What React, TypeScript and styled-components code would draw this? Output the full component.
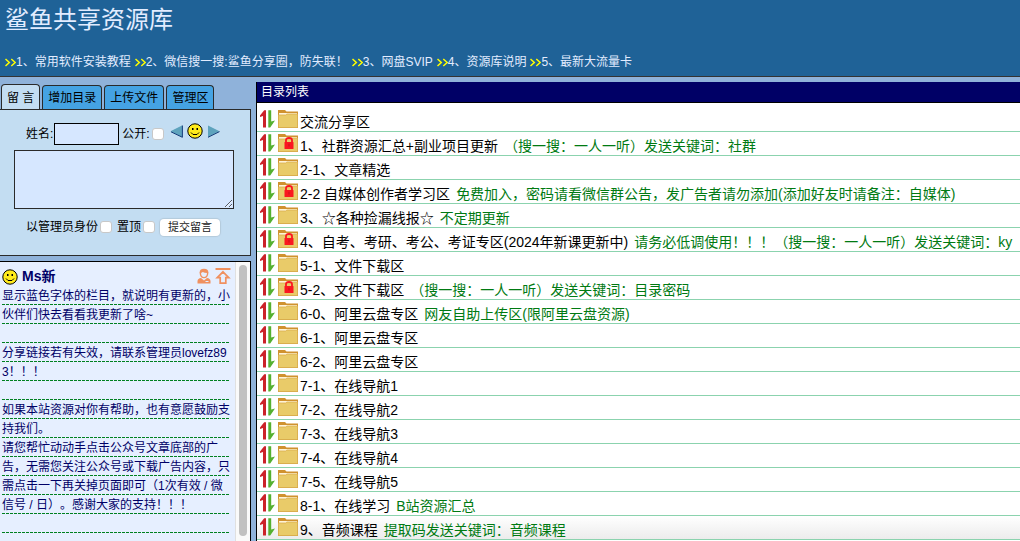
import React from "react";
import styled, { createGlobalStyle } from "styled-components";

const Global = createGlobalStyle`
  * { box-sizing: border-box; }
  html, body, #root { height: 100%; }
  body {
    margin: 0;
    overflow: hidden;
    background: #8fb2da;
    color: #000;
    font: 12px/18px "Liberation Sans", Arial, "Noto Sans CJK SC", sans-serif;
    text-spacing-trim: space-all;
  }
  a { color: inherit; text-decoration: none; }
`;

const Page = styled.div`
  display: flex;
  flex-direction: column;
  height: 100vh;
`;

const Header = styled.header`
  display: flex;
  flex-direction: column;
  gap: 13px;
  padding: 0 5px 4px;
  background: #1f6297;
  color: #e2ecff;
  border-bottom: 1px solid #333;
`;

const Title = styled.h1`
  margin: 0;
  font-size: 24px;
  font-weight: 400;
  line-height: 40px;
`;

const Nav = styled.nav`
  display: flex;
  gap: 4px;
  line-height: 19px;
`;

const NavLink = styled.a`
  display: flex;
  align-items: center;
  white-space: nowrap;
`;

const Main = styled.main`
  display: flex;
  flex: 1;
  gap: 5px;
  min-height: 0;
  padding-top: 5px;
`;

const Side = styled.aside`
  display: flex;
  flex-direction: column;
  flex: none;
  width: 251px;
  padding-top: 2px;
`;

const Tabs = styled.div`
  display: flex;
  align-items: flex-end;
  gap: 2px;
  padding-left: 1px;
`;

const Tab = styled.button<{ $active?: boolean }>`
  height: ${(p) => (p.$active ? 26 : 24)}px;
  margin-bottom: ${(p) => (p.$active ? -1 : 0)}px;
  padding: 0 5px;
  border: 1px solid #2a2a2a;
  border-bottom: 0;
  border-radius: 4px 4px 0 0;
  background: ${(p) => (p.$active ? "#c3ddf2" : "#45a3e3")};
  color: #000;
  font: inherit;
  white-space: nowrap;
`;

const Form = styled.form`
  display: flex;
  flex-direction: column;
  gap: 5px;
  height: 147px;
  padding: 13px 16px 0 14px;
  background: #c3ddf2;
  border: 1px solid #2a2a2a;
  border-left: 0;
`;

const FormRow = styled.div`
  display: flex;
  align-items: center;
  height: 22px;
  padding-left: 12px;
`;

const NameInput = styled.input`
  width: 65px;
  height: 22px;
  margin-left: 1px;
  border: 1px solid #000;
  border-radius: 0;
  background: #d6e7ff;
`;

const Check = styled.input`
  appearance: none;
  width: 12px;
  height: 12px;
  margin: 0;
  border: 1px solid #c8c8c8;
  border-radius: 3px;
  background: #fff;
`;

const CheckLabel = styled.label`
  display: flex;
  align-items: center;
  gap: 2px;
  margin-left: 3px;
`;

const Faces = styled.div`
  display: flex;
  align-items: center;
  gap: 4px;
  height: 28px;
  margin-left: 6px;
  padding-bottom: 6px;
`;

const IconButton = styled.button`
  display: flex;
  padding: 0;
  border: 0;
  background: none;
`;

const Message = styled.textarea`
  display: block;
  width: 100%;
  height: 59px;
  border: 1px solid #2a2a2a;
  border-radius: 0;
  background: #d6e7ff;
`;

const SubmitRow = styled(FormRow)`
  gap: 2px;
  margin-top: 2px;
  padding-left: 9px;
`;

const Submit = styled.button`
  height: 17px;
  margin-left: 3px;
  padding: 0 8px;
  border: 0;
  border-radius: 4px;
  background: #fff;
  box-shadow: 0 0 1px 1px #b4cadb;
  color: #222;
  font: inherit;
  font-size: 11px;
  line-height: 17px;
`;

const Board = styled.section`
  display: flex;
  flex: 1;
  min-height: 0;
  margin-top: 5px;
  border: solid #000;
  border-width: 1px 1px 0 0;
  background: #e6efff;
  color: #000066;
`;

const Post = styled.article`
  flex: 1;
  min-width: 0;
  padding: 5px 6px 0 2px;
`;

const PostHead = styled.div`
  display: flex;
  align-items: center;
  gap: 4px;
  height: 19px;
`;

const Author = styled.h2`
  flex: 1;
  margin: 0;
  font-size: 14px;
  line-height: 19px;
`;

const PostTools = styled.div`
  display: flex;
  gap: 4px;
  margin-right: -2px;
  padding-bottom: 2px;
`;

/* Every text line sits on a dashed green rule, repeated at the line height. */
const PostBody = styled.div`
  padding-top: 1px;
  line-height: 19px;
  word-break: break-all;
  background-image: linear-gradient(90deg, transparent 3px, #e6efff 3px),
    linear-gradient(transparent 18px, #008020 18px);
  background-size: 4px 19px, 100% 19px;

  p {
    margin: 0 -2px 0 0;
    min-height: 19px;
  }
`;

const ScrollTrack = styled.div`
  width: 15px;
  padding: 3px 3px 4px;
  border-left: 1px solid #e0e0e0;
  background: #fafafa;
`;

const ScrollThumb = styled.div`
  height: calc(100% - 1px);
  border-radius: 4px;
  background: #c1c1c1;
`;

const Directory = styled.section`
  display: flex;
  flex-direction: column;
  flex: 1;
  min-width: 0;
  overflow: hidden;
  border-left: 1px solid #000;
  background: #fff;
`;

const DirectoryTitle = styled.h2`
  flex: none;
  margin: 0 0 5px;
  padding: 1px 0 0 4px;
  border-bottom: 1px solid #000;
  background: #000066;
  color: #fff;
  font-size: 12px;
  font-weight: 400;
  line-height: 19px;
`;

const List = styled.ul`
  margin: 0;
  padding: 0;
  list-style: none;
  font-size: 14px;
`;

const Item = styled.li`
  display: flex;
  height: 24px;
  padding: 1px 0 0 3px;
  border-bottom: 1px solid #8bd3ae;
  white-space: nowrap;

  &:last-child {
    background: linear-gradient(#fff, #ececec);
  }
`;

const ItemLink = styled.a`
  padding: 4px 0 0 2px;
`;

const Note = styled.span`
  padding: 4px 0 0 6px;
  color: #007a12;
`;

const Chevrons = () => (
  <svg width="11" height="9" viewBox="0 0 11 9" fill="none" stroke="#ffff00" strokeWidth="1.5" aria-hidden="true">
    <path d="M0.5 1 L4.3 4.5 L0.5 8 M6.3 1 L10.2 4.5 L6.3 8" />
  </svg>
);

const Smile = () => (
  <svg width="16" height="16" viewBox="0 0 16 16" aria-hidden="true">
    <circle cx="8" cy="8" r="7.2" fill="#ffeb1c" stroke="#000" />
    <path d="M5 5h1.5v2H5zM9.5 5H11v2H9.5z" fill="#000" />
    <path d="M4 9.5L6 11.5H10L12 9.5" fill="none" stroke="#000" />
  </svg>
);

const Triangle = ({ left }: { left?: boolean }) => (
  <svg width="13" height="13" viewBox="0 0 13 13" aria-hidden="true">
    {left ? (
      <>
        <path d="M12 0.5V12L0.5 6.2Z" fill="#5ea3bd" />
        <path d="M12.4 0.5V12.3L1 6.8" fill="none" stroke="#123a78" />
      </>
    ) : (
      <>
        <path d="M1 0.5V12L12.5 6.2Z" fill="#5ea3bd" />
        <path d="M1 12.3L12.5 6.6" fill="none" stroke="#123a78" />
      </>
    )}
  </svg>
);

const UserIcon = () => (
  <svg width="14" height="16" viewBox="0 0 14 16" fill="none" stroke="#f0905f" aria-hidden="true">
    <path d="M3.4 4.2V6Q4 9.6 7 9.6Q10 9.6 10.6 6V4.2" strokeWidth="1.4" />
    <path d="M2.7 5Q2.4 0.8 7 0.8Q11.6 0.8 11.3 5Q7.5 5.2 5.8 3.9Q4.8 5 2.7 5Z" fill="#f0905f" stroke="none" />
    <path d="M0.5 15.5V13Q0.8 10.6 4 10.1L7 12.6L10 10.1Q13.2 10.6 13.5 13V15.5Z" fill="#f0905f" stroke="none" />
    <path d="M8.5 13.5H11.5" stroke="#e6efff" />
  </svg>
);

const TopIcon = () => (
  <svg width="16" height="16" viewBox="0 0 16 16" fill="none" stroke="#f0905f" aria-hidden="true">
    <path d="M0.5 1H15.5" strokeWidth="2" />
    <path d="M8 3.8L13.8 9.7H10.8V15.2H5.2V9.7H2.2Z" strokeWidth="1.7" />
  </svg>
);

const Arrows = () => (
  <svg width="15" height="19" viewBox="0 0 15 19" aria-hidden="true">
    <path d="M0 6.5L4.2 1.2H6V18.4H3V7L0 8Z" fill="#cb2229" />
    <path d="M8.3 1.2H11.2V12.4L15 11.6L10.2 18.4H8.3Z" fill="#55b030" />
  </svg>
);

const FolderSvg = styled.svg`
  margin-left: 3px;
`;

const Folder = ({ locked }: { locked?: boolean }) => (
  <FolderSvg width="20" height="20" viewBox="0 0 20 20" aria-hidden="true">
    <path d="M0 1H7L8.5 2.5H20V19H0Z" fill="#d0922f" />
    <path d="M1 4H19V7H1Z" fill="#fff4d8" />
    <path d="M0.4 6H7.5L9 5H19.6V18.5H0.4Z" fill="#e9cb69" stroke="#d9ad4e" strokeWidth="0.8" />
    {locked && (
      <>
        <path d="M8 9V7Q8 5 11 5Q14 5 14 7V9" fill="none" stroke="#fa1720" strokeWidth="1.8" />
        <rect x="6.5" y="9" width="9" height="7" rx="0.6" fill="#fa1720" />
        <path d="M11 10.8V13.5" stroke="#c3141a" />
      </>
    )}
  </FolderSvg>
);

const links = [
  "1、常用软件安装教程",
  "2、微信搜一搜:鲨鱼分享圈，防失联！",
  "3、网盘SVIP",
  "4、资源库说明",
  "5、最新大流量卡",
];

const items: { name: string; note?: string; locked?: boolean }[] = [
  { name: "交流分享区" },
  { name: "1、社群资源汇总+副业项目更新", note: "（搜一搜：一人一听）发送关键词：社群", locked: true },
  { name: "2-1、文章精选" },
  { name: "2-2 自媒体创作者学习区", note: "免费加入，密码请看微信群公告，发广告者请勿添加(添加好友时请备注：自媒体)", locked: true },
  { name: "3、☆各种捡漏线报☆", note: "不定期更新" },
  { name: "4、自考、考研、考公、考证专区(2024年新课更新中)", note: "请务必低调使用！！！（搜一搜：一人一听）发送关键词：ky", locked: true },
  { name: "5-1、文件下载区" },
  { name: "5-2、文件下载区", note: "（搜一搜：一人一听）发送关键词：目录密码", locked: true },
  { name: "6-0、阿里云盘专区", note: "网友自助上传区(限阿里云盘资源)" },
  { name: "6-1、阿里云盘专区" },
  { name: "6-2、阿里云盘专区" },
  { name: "7-1、在线导航1" },
  { name: "7-2、在线导航2" },
  { name: "7-3、在线导航3" },
  { name: "7-4、在线导航4" },
  { name: "7-5、在线导航5" },
  { name: "8-1、在线学习", note: "B站资源汇总" },
  { name: "9、音频课程", note: "提取码发送关键词：音频课程" },
];

const paragraphs = [
  "显示蓝色字体的栏目，就说明有更新的，小伙伴们快去看看我更新了啥~",
  "",
  "分享链接若有失效，请联系管理员lovefz893！！！",
  "",
  "如果本站资源对你有帮助，也有意愿鼓励支持我们。",
  "请您帮忙动动手点击公众号文章底部的广告，无需您关注公众号或下载广告内容，只需点击一下再关掉页面即可（1次有效 / 微信号 / 日）。感谢大家的支持！！！",
  "",
];

export default function App() {
  return (
    <Page>
      <Global />
      <Header>
        <Title>鲨鱼共享资源库</Title>
        <Nav>
          {links.map((text) => (
            <NavLink href="#" key={text}>
              <Chevrons />
              {text}
            </NavLink>
          ))}
        </Nav>
      </Header>
      <Main>
        <Side>
          <Tabs>
            <Tab $active>留 言</Tab>
            <Tab>增加目录</Tab>
            <Tab>上传文件</Tab>
            <Tab>管理区</Tab>
          </Tabs>
          <Form onSubmit={(e) => e.preventDefault()}>
            <FormRow>
              <label htmlFor="name">姓名:</label>
              <NameInput id="name" />
              <CheckLabel>
                公开:
                <Check type="checkbox" />
              </CheckLabel>
              <Faces>
                <IconButton type="button" aria-label="上一个">
                  <Triangle left />
                </IconButton>
                <Smile />
                <IconButton type="button" aria-label="下一个">
                  <Triangle />
                </IconButton>
              </Faces>
            </FormRow>
            <Message aria-label="留言" />
            <SubmitRow>
              <CheckLabel>
                以管理员身份
                <Check type="checkbox" />
              </CheckLabel>
              <CheckLabel>
                置顶
                <Check type="checkbox" />
              </CheckLabel>
              <Submit type="submit">提交留言</Submit>
            </SubmitRow>
          </Form>
          <Board>
            <Post>
              <PostHead>
                <Smile />
                <Author>Ms新</Author>
                <PostTools>
                  <UserIcon />
                  <TopIcon />
                </PostTools>
              </PostHead>
              <PostBody>
                {paragraphs.map((text, i) => (
                  <p key={i}>{text}</p>
                ))}
              </PostBody>
            </Post>
            <ScrollTrack>
              <ScrollThumb />
            </ScrollTrack>
          </Board>
        </Side>
        <Directory>
          <DirectoryTitle>目录列表</DirectoryTitle>
          <List>
            {items.map((item) => (
              <Item key={item.name}>
                <Arrows />
                <Folder locked={item.locked} />
                <ItemLink href="#">{item.name}</ItemLink>
                {item.note && <Note>{item.note}</Note>}
              </Item>
            ))}
          </List>
        </Directory>
      </Main>
    </Page>
  );
}
